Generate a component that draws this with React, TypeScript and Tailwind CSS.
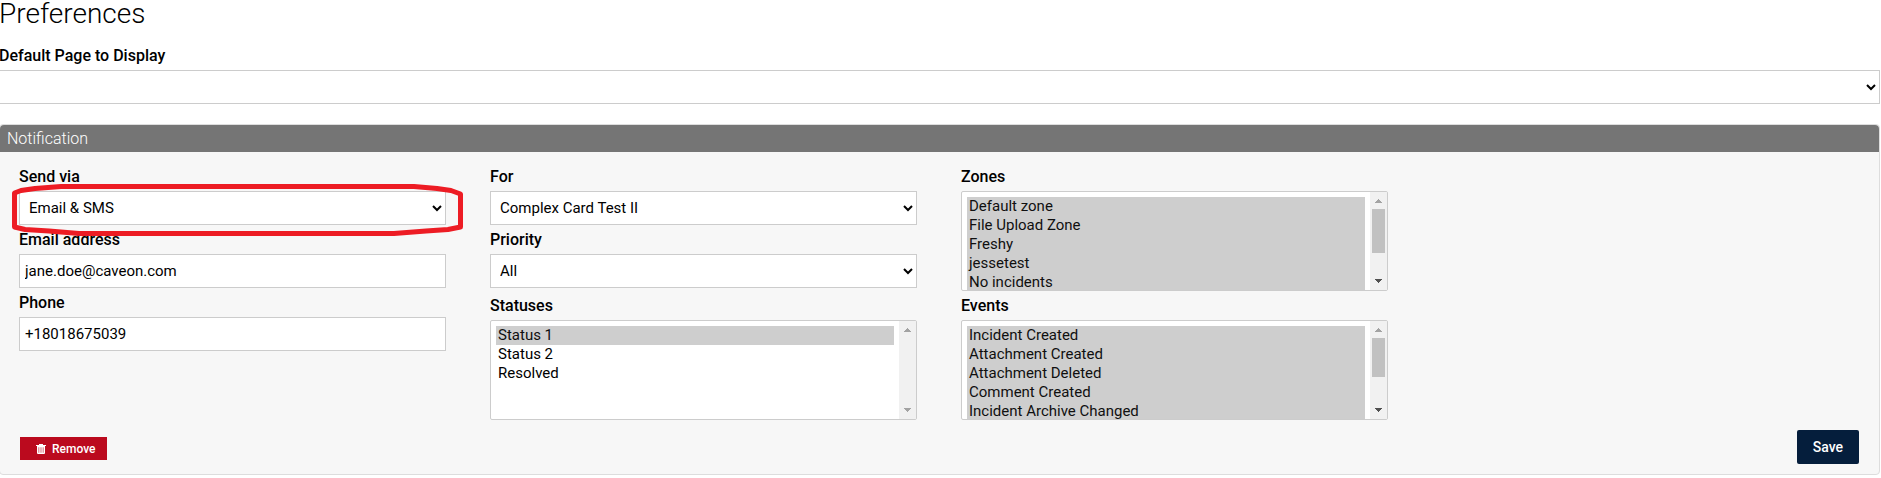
import { useState } from "react"
import { clsx } from "clsx"

const zones = ['Default zone', 'File Upload Zone', 'Freshy', 'jessetest', 'No incidents', 'Review zone', 'Test zone']
const events = ['Incident Created', 'Attachment Created', 'Attachment Deleted', 'Comment Created', 'Incident Archive Changed', 'Incident Assigned', 'Priority Changed', 'Status Changed']
const statuses = ['Status 1', 'Status 2', 'Resolved']

const OPTION_HEIGHT = 19
const LIST_HEIGHT = 98
const TRACK_HEIGHT = 64

const inputStyles = "block h-[34px] w-full border border-[#ccc] bg-white px-[5px] text-black"

type FieldProps = {
    id: string
    label: string
    className?: string
    children: React.ReactNode
}

const Field: React.FC<FieldProps> = ({ id, label, className, children }) => {
    return (
        <div className={clsx("relative flex flex-col", className)}>
            <label htmlFor={id} className="h-[29px] pt-[3px] text-base leading-6 font-medium">{label}</label>
            {children}
        </div>
    )
}

const Dropdown: React.FC<{ id: string, options: string[] }> = ({ id, options }) => {
    return (
        <select id={id} className={inputStyles}>
            {options.map((option) => <option key={option}>{option}</option>)}
        </select>
    )
}

const ScrollBar: React.FC<{ count: number, scrollTop: number }> = ({ count, scrollTop }) => {

    const contentHeight = count * OPTION_HEIGHT + 10
    const maxScroll = Math.max(contentHeight - LIST_HEIGHT, 0)
    const thumbHeight = Math.round(TRACK_HEIGHT * LIST_HEIGHT / contentHeight)
    const thumbTop = maxScroll ? Math.min(scrollTop / maxScroll, 1) * (TRACK_HEIGHT - thumbHeight) : 0

    return (
        <div className="flex w-[17px] shrink-0 flex-col bg-[#f1f1f1]" aria-hidden="true">
            <svg viewBox="0 0 17 17" className={clsx("h-[17px] w-[17px]", scrollTop > 0 ? "text-[#505050]" : "text-[#a3a3a3]")} fill="currentColor" shapeRendering="crispEdges">
                <path d="M8 7H9V8H10V9H11V10H12V11H5V10H6V9H7V8H8Z" />
            </svg>
            <div className="grow">
                {maxScroll > 0 &&
                <div className="mx-0.5 bg-[#c1c1c1]" style={{ height: thumbHeight, transform: `translateY(${thumbTop}px)` }} />
                }
            </div>
            <svg viewBox="0 0 17 17" className={clsx("h-[17px] w-[17px]", scrollTop < maxScroll ? "text-[#505050]" : "text-[#a3a3a3]")} fill="currentColor" shapeRendering="crispEdges">
                <path d="M5 6H12V7H11V8H10V9H9V10H8V9H7V8H6V7H5Z" />
            </svg>
        </div>
    )
}

const ListBox: React.FC<{ id: string, options: string[], initial: string[] }> = ({ id, options, initial }) => {

    const [selected, setSelected] = useState(initial)
    const [scrollTop, setScrollTop] = useState(0)

    return (
        <div className="flex h-[100px] overflow-hidden rounded-xs border border-[#ccc] bg-white">
            <select
                id={id}
                multiple
                value={selected}
                onChange={(e) => setSelected(Array.from(e.target.selectedOptions, (o) => o.value))}
                onScroll={(e) => setScrollTop(e.currentTarget.scrollTop)}
                className="h-full min-w-0 grow overflow-y-scroll p-[5px] text-black outline-none [scrollbar-width:none]"
            >
                {options.map((option) => <option key={option} className="h-[19px] px-0.5">{option}</option>)}
            </select>
            <ScrollBar count={options.length} scrollTop={scrollTop} />
        </div>
    )
}

// hand drawn ring around the field it sits in
const Marker: React.FC = () => {
    return (
        <svg
            className="pointer-events-none absolute top-[22px] -left-2 h-[53px] w-[calc(100%+26px)]"
            viewBox="0 0 453 53"
            preserveAspectRatio="none"
            fill="none"
            stroke="#ed1c24"
            strokeWidth="5"
            strokeLinejoin="round"
            aria-hidden="true"
        >
            <path d="M3.5 43V9L10 6.5L24 4.5L50 2.5H403L426 4.5L440 6.5L449.5 10V43L437 45.5L415 47L383 49.5H68L38 47L14 45.5Z" />
        </svg>
    )
}

const App: React.FC = () => {
    return (
        <main className="-ml-px bg-white pr-px font-[Roboto,sans-serif] text-[15px] text-black">
            <h1 className="h-[42px] text-[28px] leading-7 font-light">Preferences</h1>
            <label htmlFor="page" className="block h-7 text-base leading-7 font-medium">Default Page to Display</label>
            <Dropdown id="page" options={['']} />

            <section className="mt-5 rounded border border-[#ddd] bg-[#f7f7f7]">
                <h2 className="rounded-t bg-[#757575] px-[7px] text-base leading-[27px] font-light text-white">Notification</h2>
                <div className="grid grid-cols-4 gap-x-11 pt-[10px] pr-5 pl-[19px]">
                    <div>
                        <Field id="via" label="Send via" className="z-10">
                            <Dropdown id="via" options={['Email & SMS', 'Email', 'SMS']} />
                            <Marker />
                        </Field>
                        <Field id="email" label="Email address">
                            <input id="email" type="email" defaultValue="jane.doe@caveon.com" className={inputStyles} />
                        </Field>
                        <Field id="phone" label="Phone">
                            <input id="phone" type="tel" defaultValue="+18018675039" className={inputStyles} />
                        </Field>
                    </div>
                    <div className="flex flex-col">
                        <Field id="for" label="For">
                            <Dropdown id="for" options={['Complex Card Test II']} />
                        </Field>
                        <Field id="priority" label="Priority">
                            <Dropdown id="priority" options={['All', 'High', 'Medium', 'Low']} />
                        </Field>
                        <Field id="statuses" label="Statuses" className="mt-auto">
                            <ListBox id="statuses" options={statuses} initial={['Status 1']} />
                        </Field>
                    </div>
                    <div>
                        <Field id="zones" label="Zones">
                            <ListBox id="zones" options={zones} initial={zones} />
                        </Field>
                        <Field id="events" label="Events">
                            <ListBox id="events" options={events} initial={events} />
                        </Field>
                    </div>
                </div>
                <div className="flex items-center justify-between px-5 py-[10px]">
                    <button className="mt-[3px] flex h-[23px] items-center gap-1.5 bg-[#bb0a1e] pr-3 pl-4 text-xs font-medium text-white">
                        <svg viewBox="0 0 10 10" className="h-2.5 w-2.5" fill="currentColor" aria-hidden="true">
                            <path fillRule="evenodd" d="M3 0H7V1H10V2H0V1H3ZM1 2H9V9Q9 10 8 10H2Q1 10 1 9ZM2.6 3.3V8.7H3.2V3.3ZM4.7 3.3V8.7H5.3V3.3ZM6.8 3.3V8.7H7.4V3.3Z" />
                        </svg>
                        Remove
                    </button>
                    <button className="h-[34px] rounded-xs bg-[#051e3c] px-4 text-sm font-medium text-white">Save</button>
                </div>
            </section>
        </main>
    )
}

export default App
